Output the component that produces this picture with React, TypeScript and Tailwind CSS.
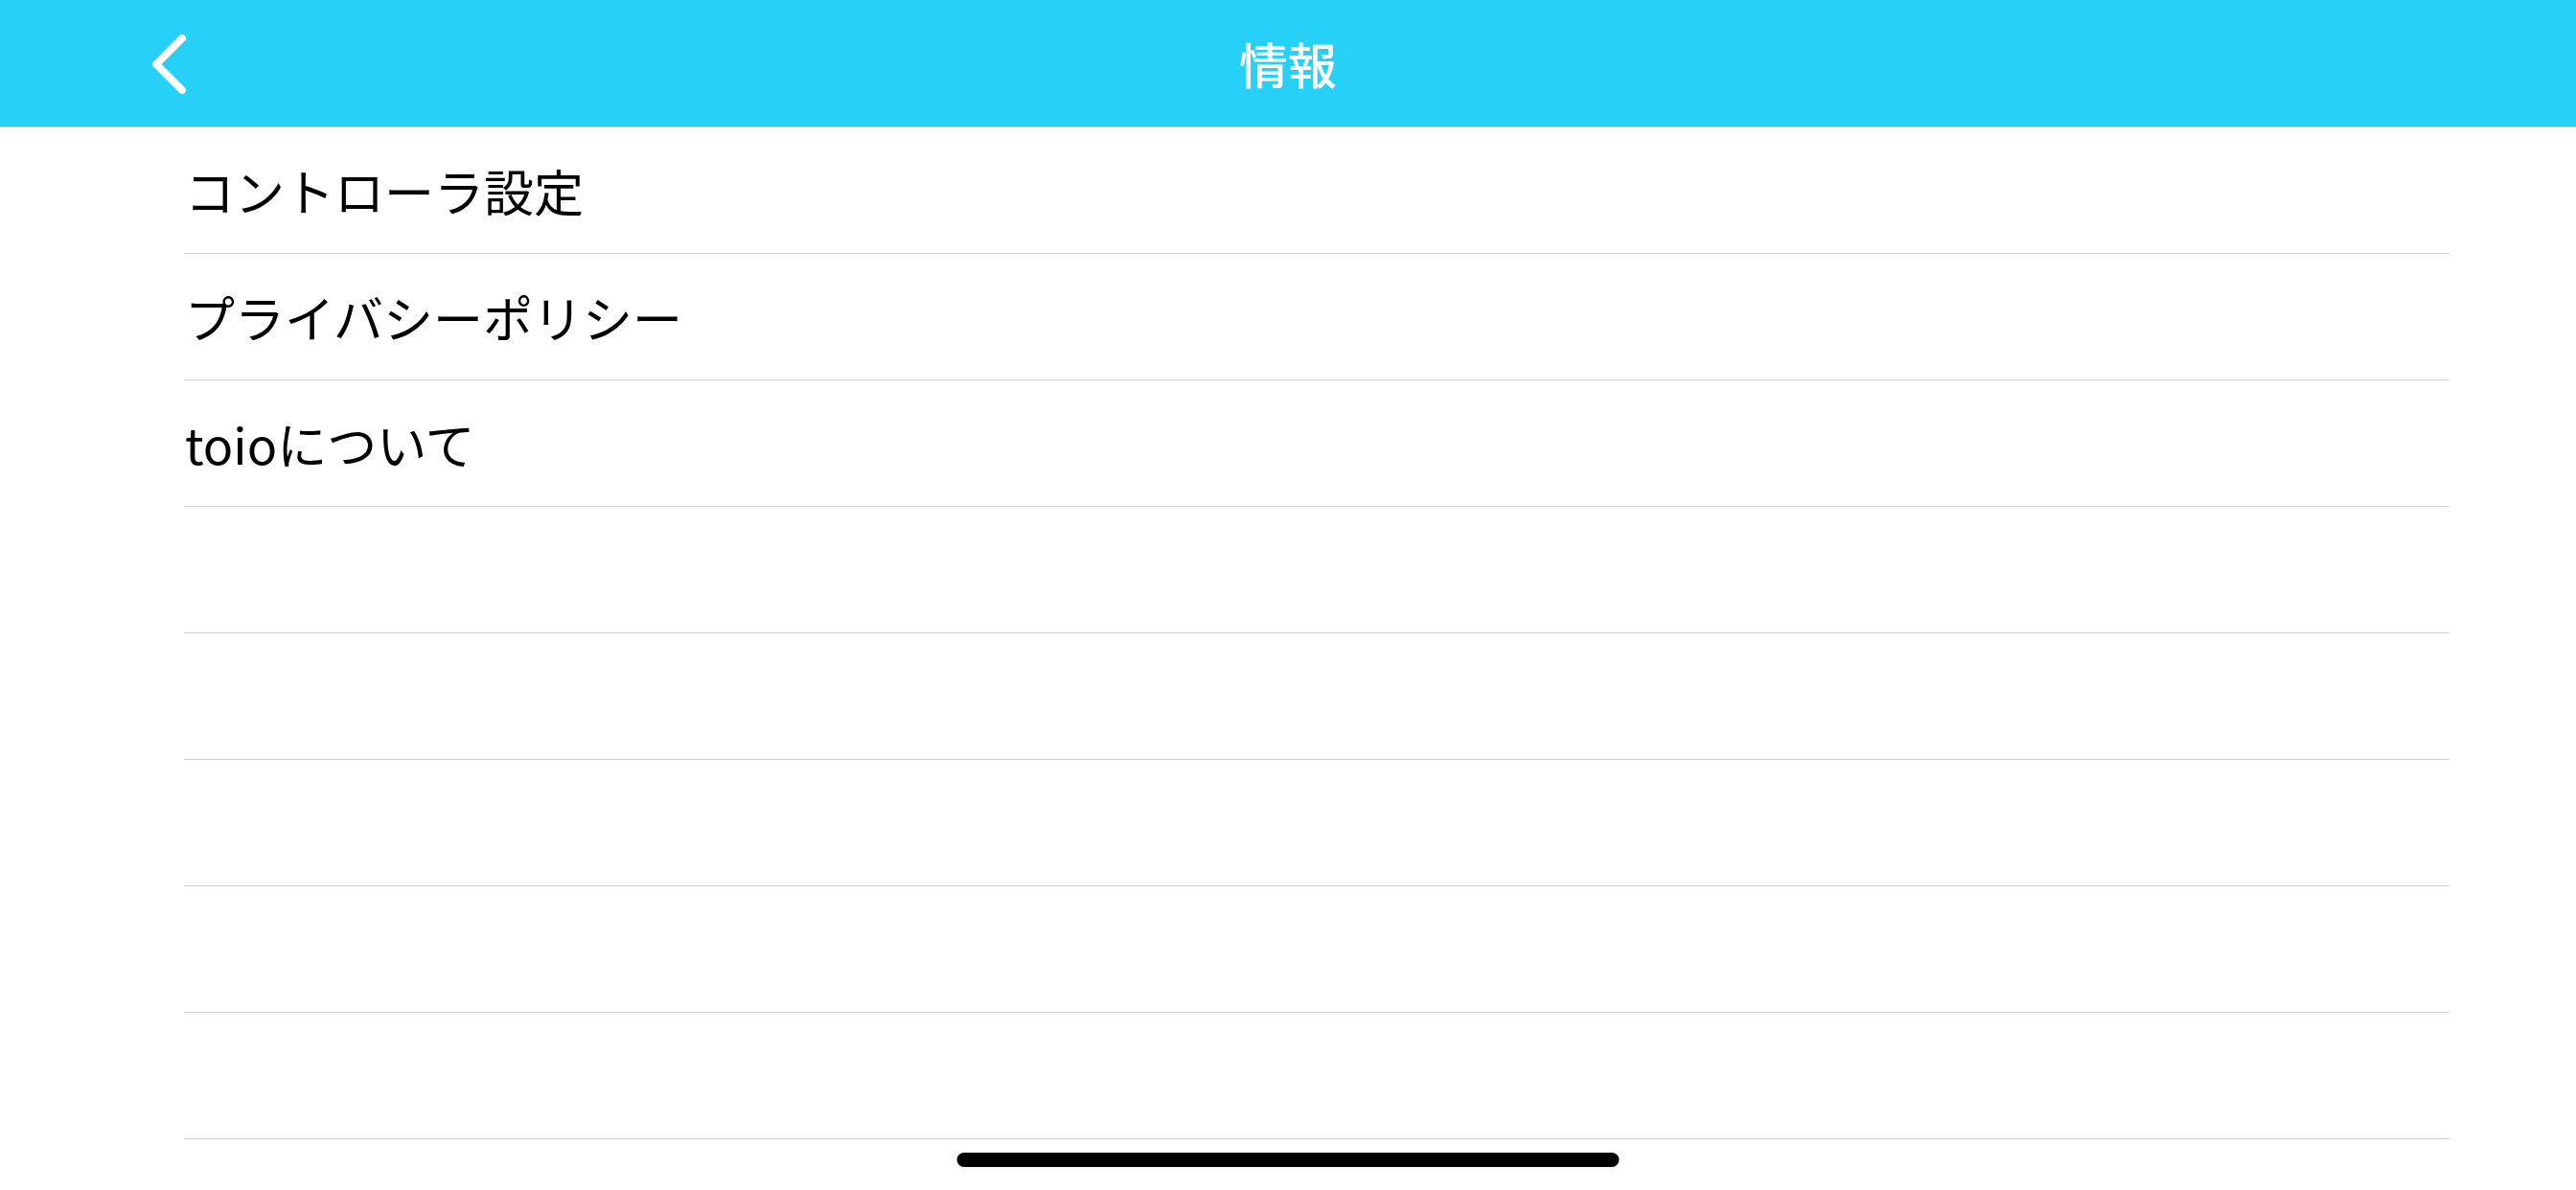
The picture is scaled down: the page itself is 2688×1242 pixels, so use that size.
const items = ['コントローラ設定', 'プライバシーポリシー', 'toioについて', '', '', '', '', '']

function BackButton() {
    return (
        <button className="flex h-[67px] w-[42px] items-center justify-center">
            <svg width="42" height="67" viewBox="0 0 42 67" fill="none">
                <path
                    d="M35 7 L8 34 L35 61"
                    stroke="white"
                    strokeWidth="8"
                    strokeLinecap="round"
                    strokeLinejoin="round"
                />
            </svg>
        </button>
    )
}

export default function App() {
    return (
        <div
            className="relative flex h-[1242px] w-full flex-col overflow-hidden bg-white"
            style={{ fontFamily: '"Noto Sans CJK JP", "Noto Sans", sans-serif' }}
        >
            {/* Header */}
            <header className="grid h-[133px] shrink-0 grid-cols-[1fr_auto_1fr] items-center border-b border-[#c4c4c4] bg-[#27d0f6]">
                <div className="flex items-center pl-[155px] pt-[1px]">
                    <BackButton />
                </div>
                <h1 className="text-[51px] font-medium leading-none text-white">情報</h1>
                <div />
            </header>

            {/* List */}
            <ul className="ml-[192px] mr-[132px] flex flex-col">
                {items.map((label, i) => (
                    <li
                        key={i}
                        className="flex h-[132px] items-center border-b border-[#cfcfcf] text-[52px] leading-none text-black"
                    >
                        <span className="pl-[1px]">{label}</span>
                    </li>
                ))}
            </ul>

            {/* Home indicator */}
            <div className="absolute bottom-[24px] left-1/2 h-[15px] w-[691px] -translate-x-1/2 rounded-full bg-black" />
        </div>
    )
}
